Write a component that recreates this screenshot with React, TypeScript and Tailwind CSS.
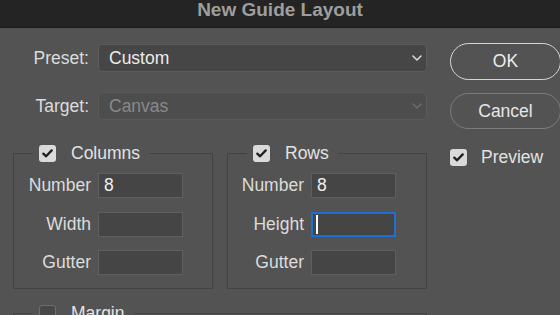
const font = { fontFamily: '"Liberation Sans", Arial, sans-serif' };

function Check({ checked = true }: { checked?: boolean }) {
  if (!checked) {
    return <span className="block h-[17px] w-[17px] rounded-[3px] border border-[#6e6e6e] bg-[#484848]" />;
  }
  return (
    <span className="flex h-[17px] w-[17px] items-center justify-center rounded-[3px] bg-[#dadada]">
      <svg width="11" height="9" viewBox="0 0 11 9" fill="none">
        <polyline points="1.3,4.6 4.1,7.3 9.7,1.4" stroke="#222" strokeWidth="2.3" strokeLinecap="round" strokeLinejoin="round" />
      </svg>
    </span>
  );
}

function Chevron({ color }: { color: string }) {
  return (
    <svg width="10" height="6" viewBox="0 0 10 6" fill="none">
      <polyline points="1,1 5,5 9,1" stroke={color} strokeWidth="1.6" strokeLinecap="round" strokeLinejoin="round" />
    </svg>
  );
}

function SelectRow({ label, value, disabled = false }: { label: string; value: string; disabled?: boolean }) {
  return (
    <div className="flex items-center">
      <span className="w-[76px] text-right text-[17.5px] text-[#dcdcdc]">{label}</span>
      <div
        className={`ml-[9px] flex h-[28px] flex-1 items-center justify-between rounded-[4px] border pl-[10px] pr-[4px] ${
          disabled ? "border-[#5a5a5a] bg-[#4d4d4d]" : "border-[#5c5c5c] bg-[#464646]"
        }`}
      >
        <span className={`text-[17.5px] ${disabled ? "text-[#8a8a8a]" : "text-[#ececec]"}`}>{value}</span>
        <Chevron color={disabled ? "#6c6c6c" : "#d8d8d8"} />
      </div>
    </div>
  );
}

function Field({ label, value, focused = false, labelW }: { label: string; value?: string; focused?: boolean; labelW: string }) {
  return (
    <div className="flex h-[25px] items-center">
      <span className={`${labelW} text-right text-[17.5px] leading-[25px] text-[#dcdcdc]`}>{label}</span>
      {focused ? (
        <div className="ml-[7px] flex h-[25px] w-[85px] items-center border-2 border-[#1d6fd8] bg-[#454545] pl-[3px]">
          <span className="h-[19px] w-[2px] bg-white" />
        </div>
      ) : (
        <input
          readOnly
          value={value ?? ""}
          className="ml-[7px] h-[25px] w-[85px] border border-[#5f5f5f] bg-[#454545] pl-[5px] text-[17.5px] leading-[23px] text-[#f0f0f0] outline-none"
          style={font}
        />
      )}
    </div>
  );
}

function Group({ title, children, className = "" }: { title: string; children: React.ReactNode; className?: string }) {
  return (
    <fieldset className={`border border-[#434343] pb-[13px] pt-[10px] ${className}`}>
      <legend className="ml-[19px] flex h-[20px] items-center pl-[6px] pr-[9px]">
        <Check />
        <span className="ml-[15px] text-[17.5px] text-[#e2e2e2]">{title}</span>
      </legend>
      <div className="flex flex-col gap-[13.5px]">{children}</div>
    </fieldset>
  );
}

export default function App() {
  return (
    <div className="h-screen w-full overflow-hidden bg-[#535353]" style={font}>
      <div className="h-[28px] border-b border-[#1c1c1c] bg-[#242424] text-center text-[19px] font-bold leading-[19px] text-[#9e9e9e]">
        New Guide Layout
      </div>

      <div className="flex pl-[13px]">
        <div className="w-[414px] pt-[16px]">
          <div className="flex flex-col gap-[20px]">
            <SelectRow label="Preset:" value="Custom" />
            <SelectRow label="Target:" value="Canvas" disabled />
          </div>

          <div className="mt-[23px] flex gap-[14px]">
            <Group title="Columns" className="w-[200px]">
              <Field label="Number" value="8" labelW="w-[77px]" />
              <Field label="Width" labelW="w-[77px]" />
              <Field label="Gutter" labelW="w-[77px]" />
            </Group>
            <Group title="Rows" className="w-[200px]">
              <Field label="Number" value="8" labelW="w-[76px]" />
              <Field label="Height" focused labelW="w-[76px]" />
              <Field label="Gutter" labelW="w-[76px]" />
            </Group>
          </div>

          <fieldset className="mt-[14px] h-[60px] border border-[#434343]">
            <legend className="ml-[19px] flex h-[20px] items-center pl-[6px] pr-[9px]">
              <Check checked={false} />
              <span className="ml-[15px] text-[17.5px] text-[#e2e2e2]">Margin</span>
            </legend>
          </fieldset>
        </div>

        <div className="ml-[23px] flex w-[111px] shrink-0 flex-col pt-[15px]">
          <button className="h-[37px] rounded-full border-[1.5px] border-[#d6d6d6] text-[17.5px] text-[#ededed]">OK</button>
          <button className="mt-[13px] h-[36px] rounded-full border-[1.5px] border-[#7c7c7c] text-[17.5px] text-[#e6e6e6]">
            Cancel
          </button>
          <div className="mt-[18px] flex items-center">
            <Check />
            <span className="ml-[14px] text-[17.5px] leading-[20px] text-[#e2e2e2]">Preview</span>
          </div>
        </div>
      </div>
    </div>
  );
}
